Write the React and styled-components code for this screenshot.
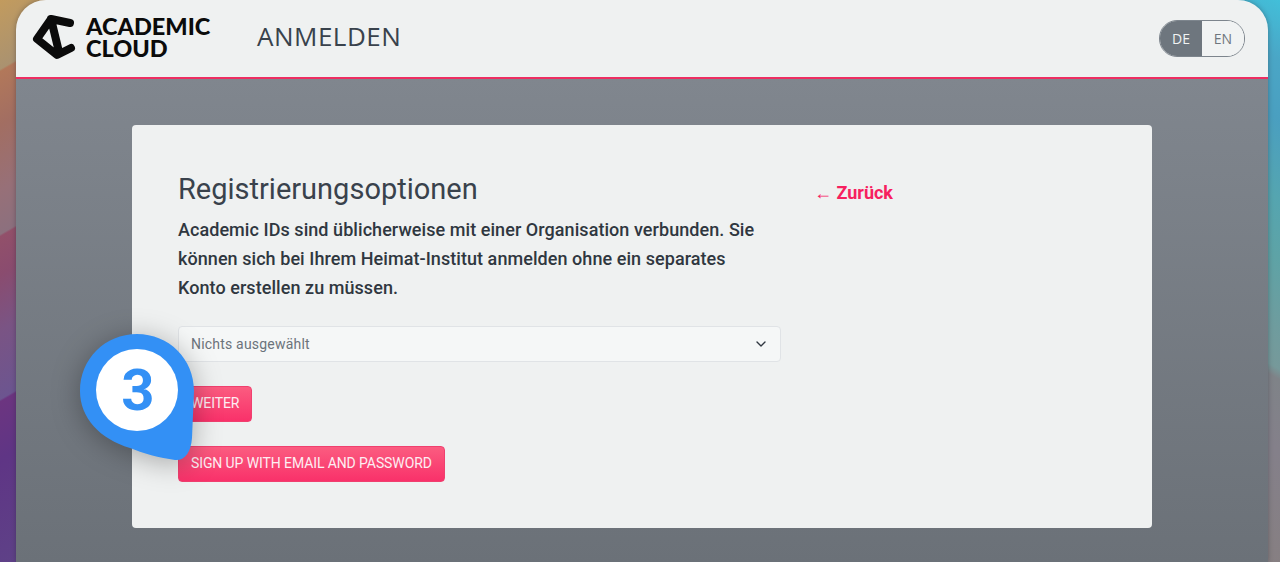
import React from 'react'
import styled, { createGlobalStyle } from 'styled-components'
import { ChevronDown } from 'lucide-react'

const GlobalStyle = createGlobalStyle`
  html, body {
    margin: 0;
    padding: 0;
    height: 100%;
    overflow: hidden;
  }
  #root {
    height: 100%;
  }
`

export default function App() {
  return (
    <Wallpaper>
      <GlobalStyle />
      <Window>
        <Header>
          <Brand>
            <LogoMark />
            <BrandName>ACADEMIC<br />CLOUD</BrandName>
          </Brand>
          <PageTitle>ANMELDEN</PageTitle>
          <LangSwitch>
            <LangOption $active>DE</LangOption>
            <LangOption>EN</LangOption>
          </LangSwitch>
        </Header>

        <Main>
          <Card>
            <FormColumn>
              <Heading>Registrierungsoptionen</Heading>
              <Intro>
                Academic IDs sind üblicherweise mit einer Organisation verbunden. Sie
                können sich bei Ihrem Heimat-Institut anmelden ohne ein separates
                Konto erstellen zu müssen.
              </Intro>
              <Select>
                <span>Nichts ausgewählt</span>
                <ChevronDown size={16} strokeWidth={2} color="#2f3740" />
              </Select>
              <Button>WEITER</Button>
              <Button>SIGN UP WITH EMAIL AND PASSWORD</Button>
            </FormColumn>
            <BackLink>
              <span>←</span> Zurück
            </BackLink>
          </Card>
          <StepPin number={3} />
        </Main>
      </Window>
    </Wallpaper>
  )
}

function LogoMark() {
  return (
    <svg width="45" height="46" viewBox="0 0 45 46">
      <path
        d="M38 9 L19 5 L5 25 L25 41 L39 34 M19 5 L27 38"
        fill="none"
        stroke="#0b0b0b"
        strokeWidth="8"
        strokeLinejoin="round"
        strokeLinecap="round"
      />
    </svg>
  )
}

function StepPin({ number }) {
  return (
    <PinWrap>
      <svg width="114" height="128" viewBox="0 0 114 128">
        <path
          d="M57 0 C89 0 114 25 114 57 L112 104 C111 118 105 127 95 126 C80 124 62 119 50 114 C20 105 0 84 0 57 C0 25 25 0 57 0 Z"
          fill="#3390f5"
        />
        <circle cx="57" cy="56" r="41" fill="#fff" />
      </svg>
      <PinNumber>{number}</PinNumber>
    </PinWrap>
  )
}

const Wallpaper = styled.div`
  height: 562px;
  padding: 0 12px 0 16px;
  box-sizing: border-box;
  background:
    linear-gradient(150deg, #c29b5e 0, #aa9270 60px, #b2785a 62px, #a26e62 108px, #977078 165px, #8c707e 203px, #92506a 205px, #8a4c6f 238px, #7a5484 286px, #6c5590 346px, #6c3580 348px, #5f3585 398px, #5e4488 100%) left / 60px 100% no-repeat,
    linear-gradient(210deg, #42bfd9 0, #4aa6c6 52px, #4a9fc0 104px, #55a5b0 173px, #5ea3a6 225px, #6f9c9e 286px, #76999a 320px, #7f8388 329px, #84808a 390px, #877f80 100%) right / 60px 100% no-repeat,
    #7f8790;
`

const Window = styled.div`
  height: 100%;
  display: flex;
  flex-direction: column;
  border-radius: 30px 30px 0 0;
  overflow: hidden;
  box-shadow: 0 0 5px rgba(40, 40, 50, 0.4);
`

const Header = styled.header`
  flex: none;
  height: 74px;
  display: flex;
  align-items: center;
  padding: 0 23px 3px 16px;
  background: #eff1f1;
  border-bottom: 2px solid #ee2e62;
`

const Brand = styled.div`
  display: flex;
  align-items: center;
  gap: 9px;
  width: 225px;
`

const BrandName = styled.div`
  font-family: Lato, sans-serif;
  font-weight: 900;
  font-size: 23.5px;
  line-height: 22px;
  color: #0b0b0b;
`

const PageTitle = styled.h1`
  margin: 0 0 2px;
  font-family: 'Open Sans', sans-serif;
  font-weight: 400;
  font-size: 26px;
  letter-spacing: 0.5px;
  color: #39424c;
`

const LangSwitch = styled.div`
  margin: 2px 0 0 auto;
  display: flex;
  height: 35px;
  border: 1px solid #7d858d;
  border-radius: 18px;
  overflow: hidden;
`

const LangOption = styled.div`
  width: 42px;
  display: flex;
  align-items: center;
  justify-content: center;
  font-family: 'Open Sans', sans-serif;
  font-weight: 500;
  font-size: 14px;
  background: ${(p) => (p.$active ? '#6e767e' : '#f1f3f3')};
  color: ${(p) => (p.$active ? '#f1f3f3' : '#6e767e')};
`

const Main = styled.main`
  position: relative;
  flex: 1;
  padding: 46px 116px 0;
  background: linear-gradient(180deg, #80868e 0%, #6b7178 100%);
`

const Card = styled.section`
  height: 403px;
  box-sizing: border-box;
  display: flex;
  padding: 46px 46px 0;
  gap: 33px;
  background: #eff1f1;
  border-radius: 4px;
`

const FormColumn = styled.div`
  width: 603px;
  display: flex;
  flex-direction: column;
  align-items: flex-start;
`

const Heading = styled.h2`
  margin: 0;
  font-family: Roboto, sans-serif;
  font-weight: 400;
  font-size: 29px;
  line-height: 36px;
  color: #39424c;
`

const Intro = styled.p`
  margin: 8px 0 0;
  width: 590px;
  font-family: Roboto, sans-serif;
  font-weight: 500;
  font-size: 18px;
  line-height: 29px;
  letter-spacing: 0.06px;
  color: #2f3740;
`

const Select = styled.div`
  margin-top: 24px;
  width: 100%;
  height: 36px;
  box-sizing: border-box;
  display: flex;
  align-items: center;
  justify-content: space-between;
  padding: 0 11px 0 12px;
  background: #f5f7f7;
  border: 1px solid #e0e3e6;
  border-radius: 4px;
  font-family: Roboto, sans-serif;
  font-size: 14px;
  letter-spacing: 0.2px;
  color: #6b737b;
`

const Button = styled.button`
  margin-top: 24px;
  height: 36px;
  padding: 0 12px 2px;
  border: 1px solid #f0406f;
  border-radius: 4px;
  background: linear-gradient(180deg, #fb5c80 0%, #f9316a 100%);
  font-family: Roboto, sans-serif;
  font-weight: 400;
  font-size: 14px;
  letter-spacing: -0.1px;
  color: #fdeef2;
`

const BackLink = styled.a`
  margin-top: 4px;
  font-family: Roboto, sans-serif;
  font-weight: 700;
  font-size: 18px;
  line-height: 36px;
  height: 36px;
  color: #f7205f;

  span {
    font-weight: 400;
  }
`

const PinWrap = styled.div`
  position: absolute;
  left: 64px;
  top: 255px;
  width: 114px;
  height: 128px;
  filter: drop-shadow(0 4px 14px rgba(0, 0, 0, 0.3));
`

const PinNumber = styled.div`
  position: absolute;
  left: 1px;
  top: 15px;
  width: 114px;
  text-align: center;
  font-family: Roboto, sans-serif;
  font-weight: 700;
  font-size: 58px;
  line-height: 82px;
  color: #3390f5;
`
